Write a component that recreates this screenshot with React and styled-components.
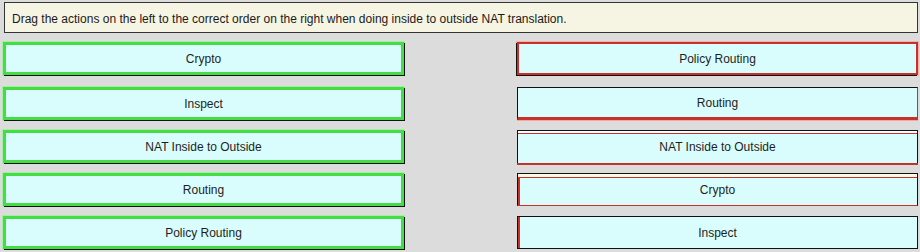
import styled, { createGlobalStyle } from "styled-components";

const GlobalStyle = createGlobalStyle`
  body {
    margin: 0;
    background: #dcdcdc;
    font-family: "Liberation Sans", Arial, sans-serif;
  }
`;

// Items on the left and where they were dropped on the right
const leftItems = ["Crypto", "Inspect", "NAT Inside to Outside", "Routing", "Policy Routing"];
const rightItems = [
  { label: "Policy Routing", mark: "full" },
  { label: "Routing", mark: "bottom" },
  { label: "NAT Inside to Outside", mark: "lines" },
  { label: "Crypto", mark: "corner" },
  { label: "Inspect", mark: "left" },
];

const red = "#c8302c";

const marks = {
  full: `border: 2px solid ${red}; box-shadow: -1px 1px 0 #111, 0 0 0 1px #f0b0a8;`,
  bottom: `border: 1px solid #111; border-bottom: 3px solid ${red}; border-right-color: ${red}; box-shadow: 0 1px 0 #f0a8a0;`,
  lines: `border: 1px solid #111; border-bottom: none; box-shadow: inset 0 2px 0 #fff, inset 0 3px 0 ${red}, 0 2px 0 ${red};`,
  corner: `border: 1px solid #111; border-bottom-color: ${red}; box-shadow: inset 0 3px 0 #fffbe8, inset 2px 4px 0 ${red};`,
  left: `border: 1px solid #111; box-shadow: inset 2px 0 0 ${red};`,
};

const App = () => {
  return (
    <>
      <GlobalStyle />
      <Page>
        <Instruction>
          Drag the actions on the left to the correct order on the right when doing inside to outside NAT translation.
        </Instruction>
        <Columns>
          <Column>
            {leftItems.map((item) => (
              <LeftBox key={item}>{item}</LeftBox>
            ))}
          </Column>
          <Column>
            {rightItems.map((item) => (
              <RightBox key={item.label} $mark={item.mark}>
                {item.label}
              </RightBox>
            ))}
          </Column>
        </Columns>
      </Page>
    </>
  );
};

export default App;

// Whole drag-and-drop area
const Page = styled.div`
  width: 920px;
  height: 252px;
  padding: 2px 2px 0 4px;
  box-sizing: border-box;
  background: #dcdcdc;
`;

// Yellow instruction strip at the top
const Instruction = styled.div`
  height: 31px;
  box-sizing: border-box;
  padding: 9px 0 0 7px;
  background: #f6f4e2;
  border: 1px solid #333;
  font-size: 12px;
  color: #1a1a1a;
`;

const Columns = styled.div`
  display: flex;
  justify-content: space-between;
  margin-top: 9px;
  margin-left: -1px;
`;

const Column = styled.div`
  display: flex;
  flex-direction: column;
  gap: 10px;
  width: 401px;
`;

const Box = styled.div`
  height: 33px;
  box-sizing: border-box;
  display: flex;
  align-items: center;
  justify-content: center;
  background: #d9fdfd;
  font-size: 12px;
  color: #1e1e1e;

  &:first-child {
    margin-bottom: 2px;
  }
`;

// Green framed source items
const LeftBox = styled(Box)`
  border: 3px solid #44dd44;
  box-shadow: 1px 1px 0 #111, 0 0 0 1px #a8eca8;
`;

// Target slots with the red marks
const RightBox = styled(Box)`
  ${(p) => marks[p.$mark]}
`;
